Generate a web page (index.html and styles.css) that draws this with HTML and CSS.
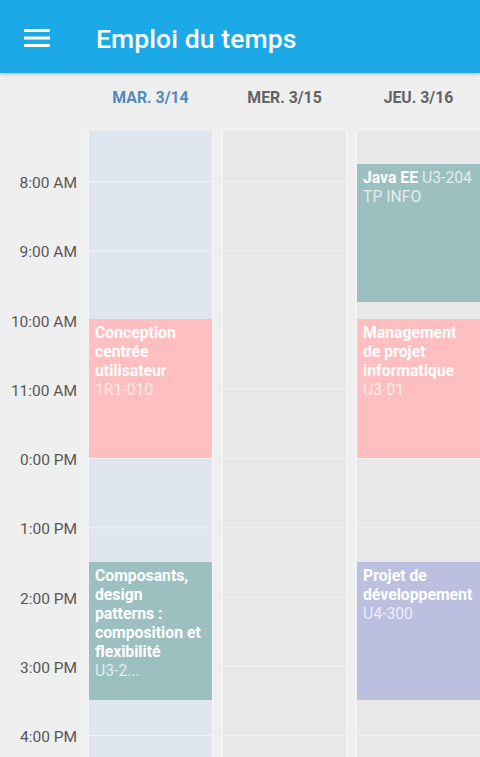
FILE: index.html
```html
<!DOCTYPE html>
<html lang="fr">
<head>
  <meta charset="utf-8" />
  <meta name="viewport" content="width=device-width,initial-scale=1" />
  <title>Emploi du temps</title>
  <link rel="stylesheet" href="styles.css">
</head>
<body>
  <header class="appbar">
    <button class="menu-btn" title="Menu">
      <svg width="26" height="18" viewBox="0 0 26 18">
        <rect x="0" y="0" width="26" height="3" fill="#fff"/>
        <rect x="0" y="7.5" width="26" height="3" fill="#fff"/>
        <rect x="0" y="15" width="26" height="3" fill="#fff"/>
      </svg>
    </button>
    <h1>Emploi du temps</h1>
  </header>

  <div class="days">
    <div></div>
    <div class="day today">MAR. 3/14</div>
    <div class="day">MER. 3/15</div>
    <div class="day">JEU. 3/16</div>
  </div>

  <main class="week">
    <div class="hours">
      <span>8:00 AM</span>
      <span>9:00 AM</span>
      <span>10:00 AM</span>
      <span>11:00 AM</span>
      <span>0:00 PM</span>
      <span>1:00 PM</span>
      <span>2:00 PM</span>
      <span>3:00 PM</span>
      <span>4:00 PM</span>
    </div>

    <!-- events are placed by start hour and duration -->
    <div class="col today">
      <div class="event pink" style="--start:10;--len:2">
        <b>Conception centrée utilisateur</b> <span class="room">1R1-010</span>
      </div>
      <div class="event teal" style="--start:13.5;--len:2">
        <b>Composants, design patterns&nbsp;: composition et flexibilité</b> <span class="room">U3-2...</span>
      </div>
    </div>

    <div class="col"></div>

    <div class="col">
      <div class="event teal" style="--start:7.75;--len:2">
        <span class="line"><b>Java EE</b> <span class="room">U3-204</span></span><br>
        <span class="room">TP INFO</span>
      </div>
      <div class="event pink" style="--start:10;--len:2">
        <b>Management de projet informatique</b> <span class="room">U3-01</span>
      </div>
      <div class="event lilac" style="--start:13.5;--len:2">
        <b>Projet de développement</b> <span class="room">U4-300</span>
      </div>
    </div>
  </main>
</body>
</html>
```

FILE: styles.css
```css
:root{
  --hour:69.25px;
  --first-hour:7.25;
  --col-width:123px;
  --col-gap:11px;
  --time-width:78px;
  --primary:#1ba9e8;
}

html,body{height:100%}
body{
  margin:0; height:757px; overflow:hidden;
  display:flex; flex-direction:column;
  background:#efefef; color:#555;
  font-family:Roboto,"Noto Sans",Arial,sans-serif;
}

.appbar{
  height:73px; flex:none;
  display:flex; align-items:center;
  background:var(--primary); color:#fff;
  box-shadow:0 1px 3px rgba(0,0,0,.25);
  position:relative; z-index:2;
}
.menu-btn{
  margin:0 0 0 24px; padding:0; border:0; background:none;
  width:26px; height:18px; display:flex; cursor:pointer;
  transform:translateY(1px);
}
.appbar h1{
  margin:0 0 0 46px; font-size:26.5px; font-weight:500; letter-spacing:.1px;
  transform:translateY(2px);
}

/* day header row */
.days{
  flex:none; height:58px;
  display:grid; grid-template-columns:var(--time-width) repeat(3,var(--col-width));
  column-gap:var(--col-gap);
}
.day{
  padding-top:15px; text-align:center;
  font-size:15.8px; font-weight:700; color:#646464; line-height:20px;
}
.day.today{color:#4f8bbb;}

/* week grid */
.week{
  flex:1; overflow:hidden;
  display:grid; grid-template-columns:var(--time-width) repeat(3,var(--col-width));
  column-gap:var(--col-gap);
}
.hours{
  display:flex; flex-direction:column;
  padding-top:calc(52px - var(--hour) / 2);
}
.hours span{
  height:var(--hour); flex:none;
  display:flex; align-items:center; justify-content:flex-end;
  padding-right:1px; font-size:15.5px; color:#575757;
}

.col{
  position:relative;
  background-color:#e8e8e8;
  background-image:linear-gradient(to bottom,rgba(255,255,255,.45) 0,rgba(255,255,255,.45) 1px,transparent 1px);
  background-size:100% var(--hour);
  background-position:0 50px;
  box-shadow:0 0 0 2px rgba(255,255,255,.25);
}
.col.today{background-color:#e0e6f0;}

.event{
  position:absolute; left:0; right:0;
  top:calc((var(--start) - var(--first-hour)) * var(--hour) - 2px);
  height:calc(var(--len) * var(--hour));
  box-sizing:border-box; padding:4px 6px;
  overflow:hidden;
  font-size:15.75px; line-height:19px; color:#fff;
}
.event b{font-weight:700;}
.event .room{color:rgba(255,255,255,.72); white-space:nowrap;}
.event .line{white-space:nowrap;}
.event.pink{background:#ffbec0;}
.event.teal{background:#9cbfbf;}
.event.lilac{background:#bdbfe1;}
```
